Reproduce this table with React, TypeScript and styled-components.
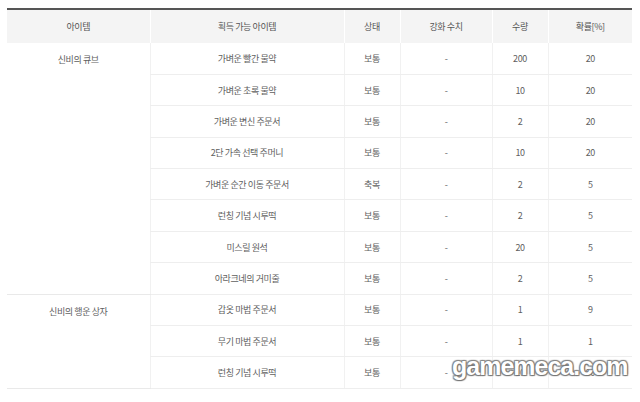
import styled, { createGlobalStyle } from "styled-components";

const GlobalStyle = createGlobalStyle`
    html, body {
        margin: 0;
        padding: 0;
        background: #fff;
    }
    body {
        font-family: "Noto Sans CJK KR", "Noto Sans", sans-serif;
    }
`;

const Page = styled.div`
    position: relative;
    width: 640px;
    height: 402px;
    padding: 8px 8px 0 7px;
    box-sizing: border-box;
    overflow: hidden;
`;

const Table = styled.table`
    width: 625px;
    table-layout: fixed;
    border-collapse: collapse;
    border-top: 2px solid #555;
    font-size: 9px;
    letter-spacing: -0.4px;
    color: #606060;
`;

const HeadCell = styled.th`
    height: 33px;
    padding: 0;
    background: #f4f4f4;
    font-weight: 400;
    color: #555;
    text-align: center;
    border-left: 1px solid #fff;
    &:first-child {
        border-left: none;
    }
`;

const Row = styled.tr`
    height: 31.4px;
`;

const Cell = styled.td<{ $first?: boolean }>`
    padding: 0;
    text-align: center;
    vertical-align: middle;
    border-bottom: 1px solid #eeeeee;
    border-left: ${(p) => (p.$first ? "none" : "1px solid #f1f1f1")};
`;

const GroupCell = styled(Cell)`
    vertical-align: top;
    padding-top: 10px;
    border-bottom: 1px solid #e9e9e9;
`;

const Watermark = styled.div`
    position: absolute;
    left: 452px;
    top: 352px;
    font-family: "Liberation Sans", Arial, sans-serif;
    font-weight: 700;
    font-size: 25px;
    letter-spacing: -1px;
    color: #fff;
    text-shadow:
        0 0 1px #666,
        1px 1px 1px #777,
        -1px -1px 1px #888,
        1px -1px 1px #888,
        -1px 1px 1px #888;
    pointer-events: none;
`;

type Item = { name: string; state: string; level: string; qty: string; rate: string };

const groups: { box: string; items: Item[] }[] = [
    {
        box: "신비의 큐브",
        items: [
            { name: "가벼운 빨간 물약", state: "보통", level: "-", qty: "200", rate: "20" },
            { name: "가벼운 초록 물약", state: "보통", level: "-", qty: "10", rate: "20" },
            { name: "가벼운 변신 주문서", state: "보통", level: "-", qty: "2", rate: "20" },
            { name: "2단 가속 선택 주머니", state: "보통", level: "-", qty: "10", rate: "20" },
            { name: "가벼운 순간 이동 주문서", state: "축복", level: "-", qty: "2", rate: "5" },
            { name: "런칭 기념 시루떡", state: "보통", level: "-", qty: "2", rate: "5" },
            { name: "미스릴 원석", state: "보통", level: "-", qty: "20", rate: "5" },
            { name: "아라크네의 거미줄", state: "보통", level: "-", qty: "2", rate: "5" },
        ],
    },
    {
        box: "신비의 행운 상자",
        items: [
            { name: "갑옷 마법 주문서", state: "보통", level: "-", qty: "1", rate: "9" },
            { name: "무기 마법 주문서", state: "보통", level: "-", qty: "1", rate: "1" },
            { name: "런칭 기념 시루떡", state: "보통", level: "-", qty: "10", rate: "90" },
        ],
    },
];

export default function App() {
    return (
        <Page>
            <GlobalStyle />
            <Table>
                <colgroup>
                    <col style={{ width: 143 }} />
                    <col style={{ width: 194 }} />
                    <col style={{ width: 56 }} />
                    <col style={{ width: 92 }} />
                    <col style={{ width: 56 }} />
                    <col style={{ width: 84 }} />
                </colgroup>
                <thead>
                    <tr>
                        <HeadCell>아이템</HeadCell>
                        <HeadCell>획득 가능 아이템</HeadCell>
                        <HeadCell>상태</HeadCell>
                        <HeadCell>강화 수치</HeadCell>
                        <HeadCell>수량</HeadCell>
                        <HeadCell>확률[%]</HeadCell>
                    </tr>
                </thead>
                <tbody>
                    {groups.map((g) =>
                        g.items.map((it, i) => (
                            <Row key={g.box + i}>
                                {i === 0 && (
                                    <GroupCell $first rowSpan={g.items.length}>
                                        {g.box}
                                    </GroupCell>
                                )}
                                <Cell>{it.name}</Cell>
                                <Cell>{it.state}</Cell>
                                <Cell>{it.level}</Cell>
                                <Cell>{it.qty}</Cell>
                                <Cell>{it.rate}</Cell>
                            </Row>
                        ))
                    )}
                </tbody>
            </Table>
            <Watermark>gamemeca.com</Watermark>
        </Page>
    );
}
